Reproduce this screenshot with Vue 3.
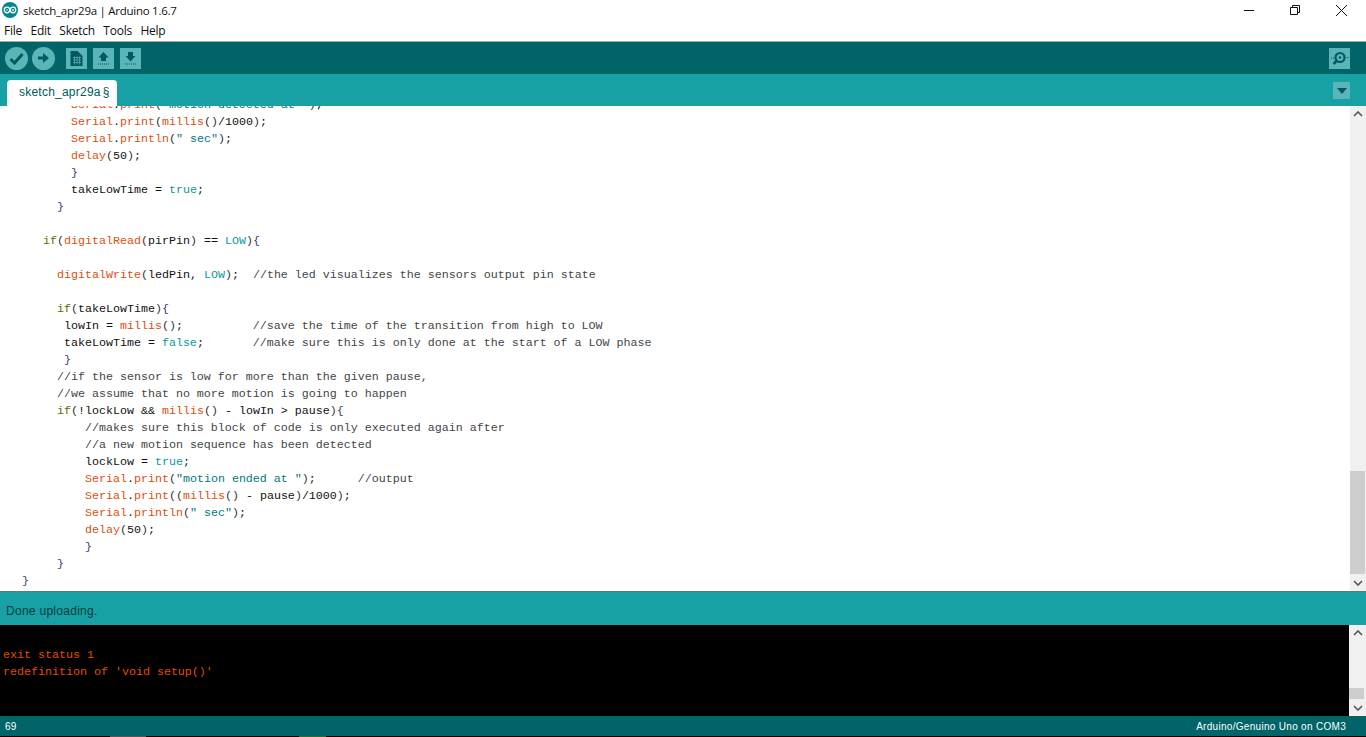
<script setup>
const source = [
  '          Serial.print("motion detected at ");',
  '          Serial.print(millis()/1000);',
  '          Serial.println(" sec");',
  '          delay(50);',
  '          }',
  '          takeLowTime = true;',
  '        }',
  '',
  '      if(digitalRead(pirPin) == LOW){',
  '',
  '        digitalWrite(ledPin, LOW);  //the led visualizes the sensors output pin state',
  '',
  '        if(takeLowTime){',
  '         lowIn = millis();          //save the time of the transition from high to LOW',
  '         takeLowTime = false;       //make sure this is only done at the start of a LOW phase',
  '         }',
  '        //if the sensor is low for more than the given pause,',
  '        //we assume that no more motion is going to happen',
  '        if(!lockLow && millis() - lowIn > pause){',
  '            //makes sure this block of code is only executed again after',
  '            //a new motion sequence has been detected',
  '            lockLow = true;',
  '            Serial.print("motion ended at ");      //output',
  '            Serial.print((millis() - pause)/1000);',
  '            Serial.println(" sec");',
  '            delay(50);',
  '            }',
  '        }',
  '   }',
]

const rules = [
  [/^\/\/.*/, 'comment'],
  [/^"[^"]*"/, 'string'],
  [/^(Serial|print|println|millis|delay|digitalRead|digitalWrite)\b/, 'func'],
  [/^(LOW|true|false)\b/, 'const'],
  [/^if\b/, 'ctrl'],
  [/^[{}]/, 'brace'],
  [/^[()]/, 'paren'],
]

function tokenize(line) {
  const tokens = []
  let rest = line
  let plain = ''
  while (rest.length) {
    const rule = rules.find(([re]) => re.test(rest))
    if (rule) {
      if (plain) tokens.push({ text: plain, cls: 'plain' })
      plain = ''
      const text = rest.match(rule[0])[0]
      tokens.push({ text, cls: rule[1] })
      rest = rest.slice(text.length)
    } else {
      plain += rest[0]
      rest = rest.slice(1)
    }
  }
  if (plain) tokens.push({ text: plain, cls: 'plain' })
  return tokens
}

const lines = source.map(tokenize)
const menus = ['File', 'Edit', 'Sketch', 'Tools', 'Help']
</script>

<template>
  <div class="app">
    <header class="titlebar">
      <div class="title-left">
        <svg class="logo" viewBox="0 0 16 16" width="16" height="16">
          <circle cx="8" cy="8" r="8" fill="#00878f" />
          <ellipse cx="5" cy="8" rx="2.7" ry="2.8" fill="none" stroke="#fff" stroke-width="1.3" />
          <ellipse cx="11" cy="8" rx="2.7" ry="2.8" fill="none" stroke="#fff" stroke-width="1.3" />
          <path d="M4 8h2M10 8h2M11 7v2" stroke="#fff" stroke-width="0.8" />
        </svg>
        <span class="title-text">sketch_apr29a | Arduino 1.6.7</span>
      </div>
      <div class="win-controls">
        <svg width="12" height="12" viewBox="0 0 12 12"><path d="M1 6.500h10" stroke="#111" stroke-width="1" /></svg>
        <svg width="12" height="12" viewBox="0 0 12 12"><path d="M1.500 3.500h7v7h-7zM3.500 3.500v-2h7v7h-2" fill="none" stroke="#111" stroke-width="1" /></svg>
        <svg width="13" height="13" viewBox="0 0 13 13"><path d="M1 1l11 11M12 1L1 12" stroke="#111" stroke-width="1" /></svg>
      </div>
    </header>

    <nav class="menubar">
      <span v-for="m in menus" :key="m">{{ m }}</span>
    </nav>

    <div class="toolbar">
      <button class="tool round">
        <svg width="15" height="13" viewBox="0 0 15 13"><path d="M1.500 7l4 4 8-9" fill="none" stroke="#00595d" stroke-width="3" /></svg>
      </button>
      <button class="tool round">
        <svg width="13" height="12" viewBox="0 0 13 12"><path d="M1 4.500h5V1l6 5-6 5V7.500H1z" fill="#00595d" /></svg>
      </button>
      <button class="tool square new">
        <svg width="15" height="17" viewBox="0 0 15 17">
          <path d="M1.500 1h7l5 5v10h-12z" fill="#00595d" />
          <path d="M4 7.500h8M4 10h8M4 12.500h8M5.500 6.500v8M8 6.500v8M10.500 6.500v8" stroke="#5ab5b8" stroke-width="0.700" />
        </svg>
      </button>
      <button class="tool square">
        <svg width="15" height="17" viewBox="0 0 15 17">
          <path d="M7.500 2l5 5.500H10V11H5V7.500H2.500z" fill="#00595d" />
          <path d="M2 14h11" stroke="#00595d" stroke-dasharray="1 1" />
        </svg>
      </button>
      <button class="tool square">
        <svg width="15" height="17" viewBox="0 0 15 17">
          <path d="M5 2h5v4h2.500l-5 5.500-5-5.500H5z" fill="#00595d" />
          <path d="M2 14h11" stroke="#00595d" stroke-dasharray="1 1" />
        </svg>
      </button>
      <button class="tool square monitor">
        <svg width="19" height="17" viewBox="0 0 19 17">
          <circle cx="10" cy="7.500" r="4.500" fill="none" stroke="#00595d" stroke-width="2.200" />
          <circle cx="10" cy="7.500" r="1.300" fill="#00595d" />
          <path d="M6.500 11l-3 3" stroke="#00595d" stroke-width="2.500" />
          <path d="M15.500 7.500h3M1 8h3" stroke="#00595d" stroke-dasharray="1 1" />
        </svg>
      </button>
    </div>

    <div class="tabstrip">
      <div class="tab">sketch_apr29a<span class="tab-mark">§</span></div>
      <button class="tab-menu">
        <svg width="10" height="6" viewBox="0 0 10 6"><path d="M0 0h10L5 6z" fill="#00595d" /></svg>
      </button>
    </div>

    <main class="editor">
      <div class="code-clip">
        <pre class="code"><div v-for="(tokens, i) in lines" :key="i" class="line"><span v-for="(t, j) in tokens" :key="j" :class="t.cls">{{ t.text }}</span></div></pre>
      </div>
      <div class="scrollbar">
        <svg class="arrow" width="10" height="6" viewBox="0 0 10 6"><path d="M1 5l4-4 4 4" fill="none" stroke="#555" stroke-width="1.600" /></svg>
        <div class="track editor-track"><div class="thumb editor-thumb"></div></div>
        <svg class="arrow" width="10" height="6" viewBox="0 0 10 6"><path d="M1 1l4 4 4-4" fill="none" stroke="#555" stroke-width="1.600" /></svg>
      </div>
    </main>

    <div class="status">Done uploading.</div>

    <section class="console">
      <pre class="console-text">exit status 1
redefinition of 'void setup()'</pre>
      <div class="scrollbar console-bar">
        <svg class="arrow" width="10" height="6" viewBox="0 0 10 6"><path d="M1 5l4-4 4 4" fill="none" stroke="#555" stroke-width="1.600" /></svg>
        <div class="track console-track"><div class="thumb console-thumb"></div></div>
        <svg class="arrow" width="10" height="6" viewBox="0 0 10 6"><path d="M1 1l4 4 4-4" fill="none" stroke="#555" stroke-width="1.600" /></svg>
      </div>
    </section>

    <footer class="footer">
      <span class="foot-num">69</span>
      <span class="foot-board">Arduino/Genuino Uno on COM3</span>
    </footer>

    <div class="edge">
      <i class="edge-grey"></i>
      <i class="edge-green"></i>
    </div>
  </div>
</template>

<style>
html, body { margin: 0; padding: 0; overflow: hidden; background: #fff; }
</style>

<style scoped>
.app {
  width: 1366px;
  height: 737px;
  display: flex;
  flex-direction: column;
  overflow: hidden;
  font-family: "Liberation Sans", Arial, sans-serif;
  background: #fff;
}
.titlebar {
  height: 20px;
  display: flex;
  justify-content: space-between;
  align-items: center;
  color: #111;
  font-size: 12px;
}
.title-left { display: flex; align-items: center; gap: 5px; padding-left: 2px; }
.title-text {
  font-family: "Open Sans", "Liberation Sans", sans-serif;
  font-size: 11.500px;
  letter-spacing: -0.270px;
}
.logo { display: block; }
.win-controls {
  display: flex;
  align-items: center;
  gap: 34px;
  padding-right: 18px;
}
.win-controls svg { display: block; }
.menubar {
  height: 21px;
  display: flex;
  align-items: center;
  gap: 8.500px;
  padding-left: 4px;
  font-size: 12px;
  letter-spacing: -0.250px;
  color: #111;
  font-family: "Open Sans", "Liberation Sans", sans-serif;
  border-bottom: 1px solid #a8a8a8;
}
.toolbar {
  height: 32px;
  background: #006468;
  display: flex;
  align-items: center;
  padding: 0 16px 0 5px;
}
.tool {
  padding: 0;
  border: 0;
  background: #5ab5b8;
  display: flex;
  align-items: center;
  justify-content: center;
}
.round { width: 23px; height: 23px; border-radius: 50%; margin-right: 4px; }
.square { width: 21px; height: 21px; margin-right: 6px; }
.new { margin-left: 7px; }
.monitor { margin-left: auto; margin-right: 0; }
.tabstrip {
  height: 32px;
  background: #17a1a5;
  display: flex;
  align-items: flex-end;
  justify-content: space-between;
  padding: 0 16px 0 7px;
}
.tab {
  width: 110px;
  height: 26px;
  box-sizing: border-box;
  background: #fff;
  border-radius: 4px 4px 0 0;
  padding-left: 12px;
  font-size: 12px;
  letter-spacing: 0.230px;
  line-height: 24px;
  color: #00595d;
  white-space: nowrap;
}
.tab-mark { margin-left: 2px; }
.tab-menu {
  width: 17px;
  height: 17px;
  margin-bottom: 7px;
  padding: 0;
  border: 0;
  background: #5ab5b8;
  display: flex;
  align-items: center;
  justify-content: center;
}
.editor {
  height: 485px;
  display: flex;
  background: #fff;
  overflow: hidden;
}
.code-clip { flex: 1; overflow: hidden; }
.code {
  margin: -9px 0 0;
  padding-left: 1px;
  font-family: "Liberation Mono", "Courier New", monospace;
  font-size: 11.670px;
  line-height: 17px;
  color: #111;
}
.line { height: 17px; white-space: pre; }
.comment { color: #3f4649; }
.string { color: #00797e; }
.func { color: #d9500f; }
.const { color: #0a97a0; }
.ctrl { color: #5e6d03; }
.brace { color: #3a3a6a; }
.paren { color: #333; }
.plain { color: #111; }
.scrollbar {
  width: 16px;
  flex: none;
  background: #f0f0f0;
  display: flex;
  flex-direction: column;
  align-items: center;
}
.arrow { flex: none; margin: 5px 0; display: block; }
.track { flex: 1; width: 100%; display: flex; flex-direction: column; }
.thumb { background: #cdcdcd; width: 15px; }
.editor-track { justify-content: flex-end; padding-bottom: 1px; box-sizing: border-box; }
.editor-thumb { height: 103px; }
.status {
  height: 34px;
  box-sizing: border-box;
  background: #17a1a5;
  border-top: 1px solid #5a7a7c;
  padding-left: 6px;
  font-size: 12px;
  letter-spacing: 0.280px;
  line-height: 38px;
  color: #053b3e;
}
.console {
  height: 91px;
  display: flex;
  background: #000;
}
.console-text {
  flex: 1;
  margin: 0;
  padding: 22px 0 0 3px;
  font-family: "Liberation Mono", "Courier New", monospace;
  font-size: 11.670px;
  line-height: 17px;
  color: #e34c00;
}
.console-bar { width: 17px; }
.console-track { justify-content: flex-end; padding-bottom: 1px; box-sizing: border-box; }
.console-thumb { height: 11px; }
.footer {
  height: 20px;
  background: #006468;
  display: flex;
  align-items: center;
  justify-content: space-between;
  padding: 0 20px 0 5px;
  color: #fff;
  font-size: 10px;
  letter-spacing: 0.300px;
}
.foot-num { padding-top: 1px; }
.foot-board { padding-top: 1px; }
.edge {
  height: 1px;
  background: #000;
  display: flex;
}
.edge-grey { width: 36px; margin-left: 110px; background: #555; }
.edge-green { width: 27px; margin-left: 153px; background: #2f6a33; }
</style>
